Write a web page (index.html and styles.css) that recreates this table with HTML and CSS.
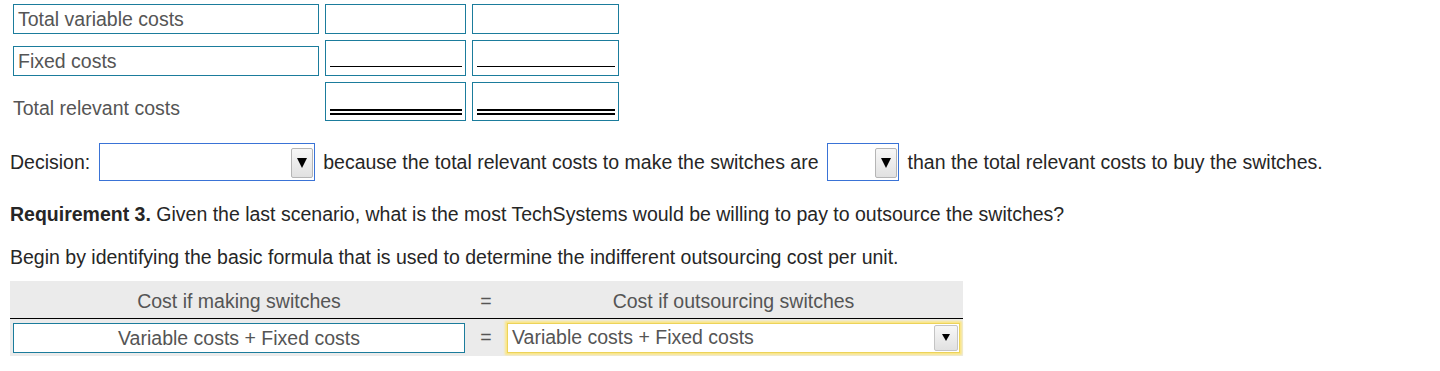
FILE: index.html
```html
<!DOCTYPE html>
<html lang="en">
<head>
<meta charset="utf-8">
<title>Make or buy decision</title>
<link rel="stylesheet" href="styles.css">
</head>
<body>
<div class="page">
  <div class="costs">
    <div class="cost-row row-a">
      <div class="label-box">Total variable costs</div>
      <div class="amount"></div>
      <div class="amount"></div>
    </div>
    <div class="cost-row row-b">
      <div class="label-box">Fixed costs</div>
      <div class="amount"><span class="rule-single"></span></div>
      <div class="amount"><span class="rule-single"></span></div>
    </div>
    <div class="cost-row row-c">
      <div class="label-plain">Total relevant costs</div>
      <div class="amount"><span class="rule-double"></span></div>
      <div class="amount"><span class="rule-double"></span></div>
    </div>
  </div>

  <div class="decision">
    <span>Decision:</span>
    <span class="select select-wide">
      <span class="select-btn"><svg width="10" height="10" viewBox="0 0 10 10"><polygon points="0,0 10,0 5,10" fill="#000"/></svg></span>
    </span>
    <span class="after-wide">because the total relevant costs to make the switches are</span>
    <span class="select select-narrow">
      <span class="select-btn"><svg width="10" height="10" viewBox="0 0 10 10"><polygon points="0,0 10,0 5,10" fill="#000"/></svg></span>
    </span>
    <span class="after-narrow">than the total relevant costs to buy the switches.</span>
  </div>

  <p class="req"><b>Requirement 3.</b> Given the last scenario, what is the most TechSystems would be willing to pay to outsource the switches?</p>
  <p class="intro">Begin by identifying the basic formula that is used to determine the indifferent outsourcing cost per unit.</p>

  <div class="formula">
    <div class="f-head">
      <div class="f-col">Cost if making switches</div>
      <div class="f-eq">=</div>
      <div class="f-col">Cost if outsourcing switches</div>
    </div>
    <div class="f-body">
      <div class="f-input">Variable costs + Fixed costs</div>
      <div class="f-eq">=</div>
      <div class="f-select">
        <span class="f-select-text">Variable costs + Fixed costs</span>
        <span class="f-btn"><svg width="8" height="7" viewBox="0 0 8 7"><polygon points="0,0 8,0 4,7" fill="#000"/></svg></span>
      </div>
    </div>
  </div>
</div>
</body>
</html>
```

FILE: styles.css
```css
* {
  box-sizing: border-box;
}

body {
  margin: 0;
  background: #fff;
  font-family: "Liberation Sans", Arial, sans-serif;
  font-size: 19.5px;
  color: #262626;
}

.page {
  padding: 4px 10px 0;
}

/* cost table */
.costs {
  display: flex;
  flex-direction: column;
  gap: 6px;
  margin-left: 3px;
}

.cost-row {
  display: grid;
  grid-template-columns: 306px 141px 147px;
  column-gap: 6px;
}

.row-a { height: 30px; }
.row-b { height: 36px; }
.row-c { height: 39px; }

.label-box {
  border: 1px solid #1b7c9c;
  height: 30px;
  padding-left: 4px;
  line-height: 28px;
  color: #555;
  align-self: end;
}

.row-a .label-box { align-self: start; }

.label-plain {
  align-self: end;
  line-height: 26px;
  color: #555;
}

.amount {
  border: 1px solid #1b7c9c;
  display: flex;
  flex-direction: column;
  justify-content: flex-end;
  padding: 0 3px 0 4px;
}

.rule-single {
  display: block;
  height: 1px;
  background: #000;
  margin-bottom: 8px;
}

.rule-double {
  display: block;
  height: 6px;
  border-top: 2px solid #000;
  border-bottom: 2px solid #000;
  margin-bottom: 5px;
}

/* decision sentence */
.decision {
  display: flex;
  align-items: center;
  margin-top: 22px;
  height: 38px;
}

.select {
  height: 38px;
  border: 1px solid #3a73d6;
  display: flex;
  justify-content: flex-end;
  align-items: flex-end;
  padding: 0 1px 2px 0;
  background: #fff;
}

.select-wide {
  width: 216px;
  margin-left: 9px;
}

.select-narrow {
  width: 72px;
  margin-left: 8px;
}

.after-wide { margin-left: 8px; }
.after-narrow { margin-left: 9px; }

.select-btn {
  width: 22px;
  height: 30px;
  border: 1px solid #b5b5b5;
  border-radius: 2px;
  background: linear-gradient(#f7f7f7, #e1e1e1);
  display: flex;
  align-items: center;
  justify-content: center;
}

.select-btn svg {
  display: block;
}

/* requirement text */
.req {
  margin: 22px 0 0;
  line-height: 22px;
}

.req b {
  font-weight: bold;
}

.intro {
  margin: 21px 0 0;
  line-height: 22px;
}

/* formula table */
.formula {
  margin-top: 13px;
  width: 953px;
  background: #ebebeb;
}

.f-head,
.f-body {
  display: grid;
  grid-template-columns: 452px 42px 453px;
  padding: 0 3px;
  align-items: center;
  color: #555;
}

.f-head {
  height: 38px;
  padding-top: 3px;
  border-bottom: 1px solid #000;
}

.f-body {
  height: 37px;
}

.f-col {
  text-align: center;
}

.f-eq {
  text-align: center;
}

.f-input {
  height: 30px;
  border: 1px solid #1b7c9c;
  background: #fff;
  text-align: center;
  line-height: 28px;
}

.f-select {
  height: 30px;
  border: 1px solid #ecd35a;
  box-shadow: 0 0 2px 2px #fbe684;
  background: #fff;
  display: flex;
  align-items: center;
  justify-content: space-between;
  padding: 0 0 0 4px;
}

.f-btn {
  width: 24px;
  height: 26px;
  border: 1px solid #c4c4c4;
  border-radius: 2px;
  background: linear-gradient(#f7f7f7, #e1e1e1);
  display: flex;
  align-items: center;
  justify-content: center;
  margin-right: 1px;
}

.f-btn svg {
  display: block;
}
```
